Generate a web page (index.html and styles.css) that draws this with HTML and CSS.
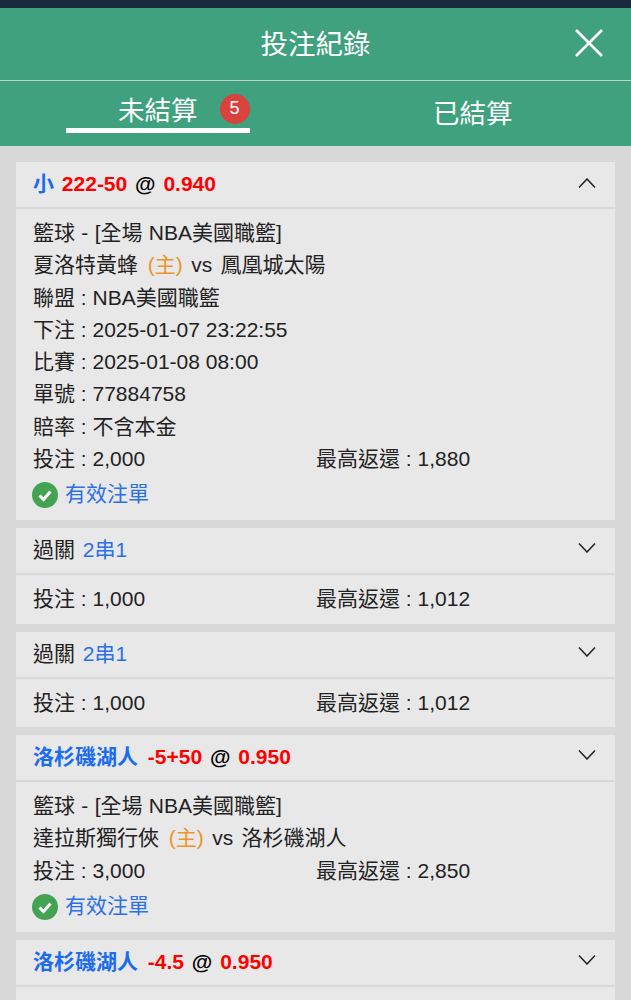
FILE: index.html
```html
<!DOCTYPE html>
<html>

<head>
    <title>投注紀錄</title>
    <meta charset="utf-8" />
    <link rel="stylesheet" href="styles.css">
</head>

<body>
    <div class="topstrip"></div>
    <div class="titlebar">
        <span class="title">投注紀錄</span>
        <svg class="close" width="30" height="30" viewBox="0 0 30 30">
            <path d="M2 2 L28 28 M28 2 L2 28" stroke="#fff" stroke-width="2.6" fill="none" />
        </svg>
    </div>
    <div class="tabs">
        <div class="tab tab-active">
            <span>未結算</span>
            <span class="badge">5</span>
        </div>
        <div class="tab tab-other">已結算</div>
    </div>

    <div class="list">
        <div class="card">
            <div class="head">
                <div class="head-text"><span class="blue">小</span> <span class="red">222-50</span> @ <span class="red">0.940</span></div>
                <svg class="chev chev-up" width="18" height="10" viewBox="0 0 18 10"><path d="M1 9.5 L9 1 L17 9.5" /></svg>
            </div>
            <div class="body">
                <div class="line sport">籃球 - [全場 NBA美國職籃]</div>
                <div class="line match">夏洛特黃蜂 <span class="orange">(主)</span> vs 鳳凰城太陽</div>
                <div class="line">聯盟 : NBA美國職籃</div>
                <div class="line">下注 : 2025-01-07 23:22:55</div>
                <div class="line">比賽 : 2025-01-08 08:00</div>
                <div class="line">單號 : 77884758</div>
                <div class="line">賠率 : 不含本金</div>
                <div class="line cols"><span class="col">投注 : 2,000</span><span>最高返還 : 1,880</span></div>
                <div class="status">
                    <svg width="26" height="26" viewBox="0 0 26 26"><circle cx="13" cy="13" r="13" fill="#43a353" /><path d="M7.5 13.5 L11.5 17.5 L18.5 9.5" stroke="#fff" stroke-width="3" fill="none" /></svg>
                    <span class="blue-light">有效注單</span>
                </div>
            </div>
        </div>

        <div class="card">
            <div class="head head-plain">
                <div class="head-text">過關 <span class="blue-light">2串1</span></div>
                <svg class="chev" width="18" height="10" viewBox="0 0 18 10"><path d="M1 .5 L9 9 L17 .5" /></svg>
            </div>
            <div class="body body-short">
                <div class="line cols"><span class="col">投注 : 1,000</span><span>最高返還 : 1,012</span></div>
            </div>
        </div>

        <div class="card">
            <div class="head head-plain">
                <div class="head-text">過關 <span class="blue-light">2串1</span></div>
                <svg class="chev" width="18" height="10" viewBox="0 0 18 10"><path d="M1 .5 L9 9 L17 .5" /></svg>
            </div>
            <div class="body body-short">
                <div class="line cols"><span class="col">投注 : 1,000</span><span>最高返還 : 1,012</span></div>
            </div>
        </div>

        <div class="card">
            <div class="head">
                <div class="head-text"><span class="blue team">洛杉磯湖人</span> <span class="red">-5+50</span> @ <span class="red">0.950</span></div>
                <svg class="chev" width="18" height="10" viewBox="0 0 18 10"><path d="M1 .5 L9 9 L17 .5" /></svg>
            </div>
            <div class="body">
                <div class="line sport">籃球 - [全場 NBA美國職籃]</div>
                <div class="line match">達拉斯獨行俠 <span class="orange">(主)</span> vs 洛杉磯湖人</div>
                <div class="line cols"><span class="col">投注 : 3,000</span><span>最高返還 : 2,850</span></div>
                <div class="status">
                    <svg width="26" height="26" viewBox="0 0 26 26"><circle cx="13" cy="13" r="13" fill="#43a353" /><path d="M7.5 13.5 L11.5 17.5 L18.5 9.5" stroke="#fff" stroke-width="3" fill="none" /></svg>
                    <span class="blue-light">有效注單</span>
                </div>
            </div>
        </div>

        <div class="card">
            <div class="head">
                <div class="head-text"><span class="blue team">洛杉磯湖人</span> <span class="red">-4.5</span> @ <span class="red">0.950</span></div>
                <svg class="chev" width="18" height="10" viewBox="0 0 18 10"><path d="M1 .5 L9 9 L17 .5" /></svg>
            </div>
            <div class="body">
                <div class="line sport">籃球 - [全場 NBA美國職籃]</div>
            </div>
        </div>
    </div>
</body>

</html>
```

FILE: styles.css
```css
html,
body {
    margin: 0;
    height: 1000px;
    overflow: hidden;
}

body {
    background-color: #d8d8d8;
    font-family: "Liberation Sans", "Noto Sans CJK TC", sans-serif;
    font-size: 21px;
    color: #222;
}

.topstrip {
    height: 8px;
    background-color: #1a2a3d;
}

.titlebar {
    height: 68px;
    padding-bottom: 4px;
    background-color: #3fa17d;
    border-bottom: 1px solid #bcd5ca;
    display: flex;
    align-items: center;
    justify-content: center;
    position: relative;
}

.title {
    color: #fff;
    font-size: 27.5px;
}

.close {
    position: absolute;
    right: 27px;
    top: 20px;
}

.tabs {
    height: 65px;
    background-color: #3fa17d;
    display: flex;
    color: #fff;
    font-size: 26.5px;
}

.tab {
    display: flex;
    align-items: center;
}

.tab-active {
    width: 184px;
    height: 52px;
    margin-left: 66px;
    gap: 22px;
    border-bottom: 5px solid #fff;
    padding: 8px 0 0 52px;
    box-sizing: border-box;
}

.tab-other {
    margin-left: 183px;
    height: 60px;
}

.badge {
    width: 30px;
    height: 30px;
    border-radius: 50%;
    background-color: #d9423d;
    font-size: 18px;
    display: flex;
    align-items: center;
    justify-content: center;
    flex-shrink: 0;
}

.list {
    padding: 16px 16px 0;
    display: flex;
    flex-direction: column;
    gap: 8px;
}

.card {
    background-color: #e8e8e8;
}

.head {
    height: 40px;
    display: flex;
    align-items: center;
    justify-content: space-between;
    padding: 0 19px 5px 17px;
    border-bottom: 2px solid #d8d8d8;
    font-weight: bold;
    color: #000;
}

.head-text {
    word-spacing: 2px;
}

.team {
    margin-right: 2px;
}

.head-plain {
    font-weight: normal;
    color: #222;
}

.chev {
    fill: none;
    stroke: #222;
    stroke-width: 1.5;
}

.chev-up {
    margin-top: 2px;
}

.body {
    padding: 8px 17px 8px;
}

.body-short {
    padding-bottom: 8.25px;
}

.line {
    height: 32.25px;
    line-height: 32.25px;
    white-space: nowrap;
}

.sport {
    word-spacing: 0.5px;
}

.match {
    word-spacing: 2.5px;
}

.match .orange {
    margin-left: 1.5px;
}

.cols {
    display: flex;
}

.col {
    width: 283px;
}

.status {
    height: 34px;
    margin: 3px 0 0 -1px;
    display: flex;
    align-items: center;
    gap: 7px;
}

.status span {
    margin-bottom: 6px;
}

.blue {
    color: #1a6cf0;
}

.blue-light {
    color: #2a70ea;
}

.red {
    color: #f00;
}

.orange {
    color: #f0932b;
}
```
